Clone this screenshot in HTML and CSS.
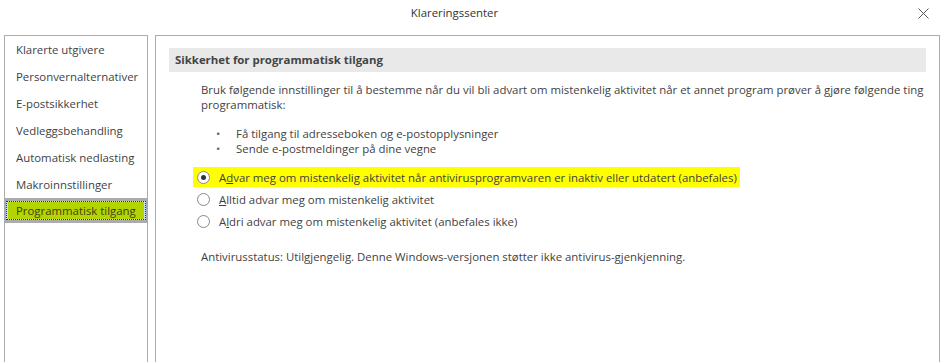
FILE: index.html
```html
<!DOCTYPE html>
<html lang="nb">
<head>
    <meta charset="UTF-8">
    <title>Klareringssenter</title>
    <link rel="stylesheet" href="styles.css">
</head>
<body>
    <div class="titlebar">
        <div class="title">Klareringssenter</div>
        <div class="close">
            <svg width="11" height="11" viewBox="0 0 11 11"><path d="M0.5 0.5 L10.5 10.5 M10.5 0.5 L0.5 10.5" stroke="#555" stroke-width="1" fill="none"/></svg>
        </div>
    </div>

    <div class="main">
        <div class="nav">
            <div class="nav-item">Klarerte utgivere</div>
            <div class="nav-item">Personvernalternativer</div>
            <div class="nav-item">E-postsikkerhet</div>
            <div class="nav-item">Vedleggsbehandling</div>
            <div class="nav-item">Automatisk nedlasting</div>
            <div class="nav-item">Makroinnstillinger</div>
            <div class="nav-item selected"><span class="focus"><span class="marker">Programmatisk tilgang</span></span></div>
        </div>

        <div class="content">
            <div class="section-head">Sikkerhet for programmatisk tilgang</div>
            <div class="section-body">
                <p class="intro">Bruk følgende innstillinger til å bestemme når du vil bli advart om mistenkelig aktivitet når et annet program prøver å gjøre følgende ting programmatisk:</p>
                <ul class="bullets">
                    <li>Få tilgang til adresseboken og e-postopplysninger</li>
                    <li>Sende e-postmeldinger på dine vegne</li>
                </ul>
                <div class="radios">
                    <div class="radio-row highlight"><span class="radio checked"></span><span>A<u>d</u>var meg om mistenkelig aktivitet når antivirusprogramvaren er inaktiv eller utdatert (anbefales)</span></div>
                    <div class="radio-row"><span class="radio"></span><span><u>A</u>lltid advar meg om mistenkelig aktivitet</span></div>
                    <div class="radio-row"><span class="radio"></span><span>A<u>l</u>dri advar meg om mistenkelig aktivitet (anbefales ikke)</span></div>
                </div>
                <p class="status">Antivirusstatus: Utilgjengelig. Denne Windows-versjonen støtter ikke antivirus-gjenkjenning.</p>
            </div>
        </div>
    </div>
</body>
</html>
```

FILE: styles.css
```css
* {
    margin: 0;
    padding: 0;
    box-sizing: border-box;
}

body {
    font-family: "Open Sans", "Liberation Sans", sans-serif;
    font-size: 11.4px;
    color: #3f3f3f;
    background: #fff;
    overflow: hidden;
    height: 100vh;
}

/* tittellinje */
.titlebar {
    display: flex;
    align-items: flex-start;
    height: 35px;
    padding-top: 5px;
}

.title {
    flex: 1;
    text-align: center;
    line-height: 16px;
    color: #333;
}

.close {
    width: 28px;
    height: 16px;
    margin-right: 8px;
    display: flex;
    align-items: center;
    justify-content: center;
}

.main {
    display: flex;
    gap: 7px;
    padding-left: 4px;
    padding-right: 5px;
}

/* venstre meny */
.nav {
    width: 144px;
    height: 340px;
    border: 1px solid #ababab;
}

.nav-item {
    height: 27px;
    line-height: 27px;
    padding-left: 11px;
    white-space: nowrap;
}

.nav-item.selected {
    height: 25px;
    padding: 3px 0 3px 0;
    background: #ababab;
    line-height: 19px;
}

.focus {
    display: block;
    height: 19px;
    margin: 0 1px;
    background: #c2e0f5;
    border: 1px dotted #333;
    padding-left: 1px;
}

.marker {
    display: block;
    height: 17px;
    line-height: 17px;
    margin-right: 1px;
    background: #b4d400;
    padding-left: 8px;
    color: #3e3e1a;
}

/* innhold */
.content {
    flex: 1;
    height: 340px;
    border: 1px solid #ababab;
    padding: 12px 13px 0 13px;
}

.section-head {
    height: 24px;
    line-height: 24px;
    background: #e9e9e9;
    padding-left: 6px;
    font-weight: bold;
    color: #444;
}

.section-body {
    padding-left: 32px;
}

.intro {
    margin-top: 10px;
    margin-right: -10px;
    line-height: 15px;
}

.bullets {
    margin-top: 14px;
    line-height: 15px;
    list-style: none;
}

.bullets li {
    position: relative;
    padding-left: 35px;
}

.bullets li::before {
    content: "•";
    position: absolute;
    left: 15px;
    color: #666;
}

.radios {
    margin-top: 11px;
    margin-left: -8px;
}

.radio-row {
    display: flex;
    align-items: center;
    gap: 9px;
    height: 22px;
    padding-left: 4px;
    width: fit-content;
    padding-right: 3px;
}

.radio-row.highlight {
    background: #ffff00;
    height: 20px;
    margin: 1px 0;
}

.radio {
    width: 13px;
    height: 13px;
    border-radius: 50%;
    border: 1px solid #888;
    background: #fff;
    display: flex;
    align-items: center;
    justify-content: center;
}

.radio.checked::after {
    content: "";
    width: 5px;
    height: 5px;
    border-radius: 50%;
    background: #333;
}

.status {
    margin-top: 17px;
    line-height: 16px;
}
```
